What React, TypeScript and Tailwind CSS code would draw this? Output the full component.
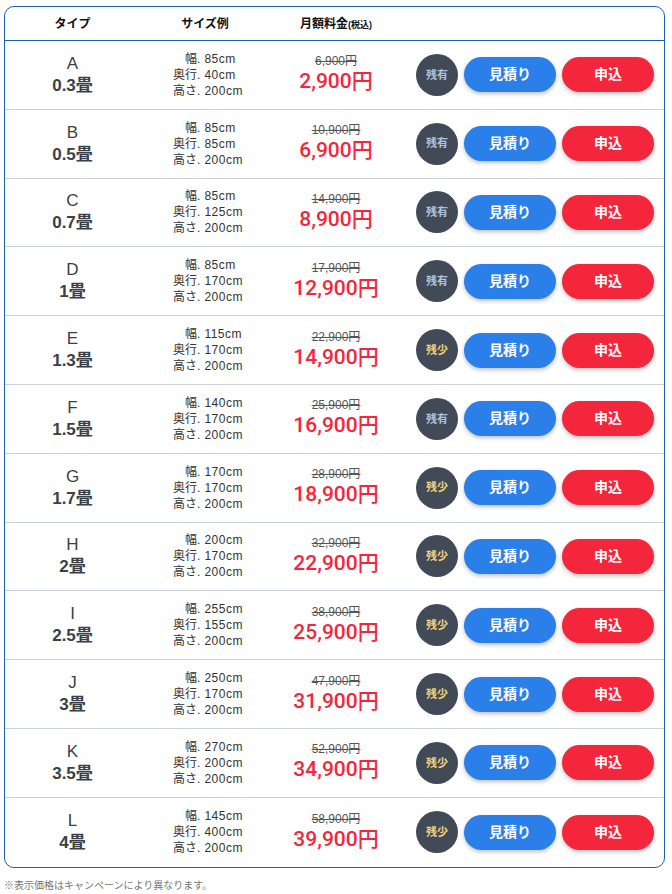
const ROWS = [
  { type: 'A', tatami: '0.3畳', w: 85, d: 40, h: 200, was: '6,900', price: '2,900', stock: 'many' },
  { type: 'B', tatami: '0.5畳', w: 85, d: 85, h: 200, was: '10,900', price: '6,900', stock: 'many' },
  { type: 'C', tatami: '0.7畳', w: 85, d: 125, h: 200, was: '14,900', price: '8,900', stock: 'many' },
  { type: 'D', tatami: '1畳', w: 85, d: 170, h: 200, was: '17,900', price: '12,900', stock: 'many' },
  { type: 'E', tatami: '1.3畳', w: 115, d: 170, h: 200, was: '22,900', price: '14,900', stock: 'few' },
  { type: 'F', tatami: '1.5畳', w: 140, d: 170, h: 200, was: '25,900', price: '16,900', stock: 'many' },
  { type: 'G', tatami: '1.7畳', w: 170, d: 170, h: 200, was: '28,900', price: '18,900', stock: 'few' },
  { type: 'H', tatami: '2畳', w: 200, d: 170, h: 200, was: '32,900', price: '22,900', stock: 'few' },
  { type: 'I', tatami: '2.5畳', w: 255, d: 155, h: 200, was: '38,900', price: '25,900', stock: 'few' },
  { type: 'J', tatami: '3畳', w: 250, d: 170, h: 200, was: '47,900', price: '31,900', stock: 'few' },
  { type: 'K', tatami: '3.5畳', w: 270, d: 200, h: 200, was: '52,900', price: '34,900', stock: 'few' },
  { type: 'L', tatami: '4畳', w: 145, d: 400, h: 200, was: '58,900', price: '39,900', stock: 'few' },
] as const;

const FONT = '[font-family:"Liberation_Sans","Noto_Sans_CJK_JP",sans-serif]';

export default function App() {
  return (
    <div className={`min-h-screen bg-white pt-[6px] ${FONT}`}>
      <div className="ml-[4px] w-[661px] overflow-hidden rounded-[10px] border border-[#1b5fb0]">
        {/* Header */}
        <div className="grid h-[34px] grid-cols-[135px_130px_132px_1fr] items-center border-b border-[#1b5fb0] text-[12px] font-bold text-[#111]">
          <div className="text-center">タイプ</div>
          <div className="text-center">サイズ例</div>
          <div className="text-center">
            月額料金<span className="text-[9px]">(税込)</span>
          </div>
          <div />
        </div>

        {ROWS.map((r, i) => (
          <div
            key={r.type}
            className={`grid h-[68.8px] grid-cols-[135px_130px_132px_1fr] items-center ${
              i < ROWS.length - 1 ? 'border-b border-[#cdd2da]' : ''
            }`}
          >
            {/* Type */}
            <div className="flex flex-col items-center text-[#3a3f48]">
              <span className="text-[17px] leading-[22px]">{r.type}</span>
              <span className="text-[17px] font-bold leading-[22px]">{r.tatami}</span>
            </div>

            {/* Size */}
            <div className="flex justify-center pl-[6px]">
              <div className="grid grid-cols-[auto_auto] gap-x-[4px] text-[12px] leading-[16px] text-[#333]">
                <span className="text-right">幅.</span>
                <span className="tracking-[0.04em]">{r.w}cm</span>
                <span className="text-right">奥行.</span>
                <span className="tracking-[0.04em]">{r.d}cm</span>
                <span className="text-right">高さ.</span>
                <span className="tracking-[0.04em]">{r.h}cm</span>
              </div>
            </div>

            {/* Price */}
            <div className="flex flex-col items-center">
              <span className="text-[12px] leading-[14px] text-[#555] line-through">{r.was}円</span>
              <span className="text-[21px] font-medium leading-[27px] text-[#f4263b] [font-family:Roboto,'Noto_Sans_CJK_JP',sans-serif]">
                {r.price}円
              </span>
            </div>

            {/* Actions */}
            <div className="flex items-center justify-center gap-[6px] pl-[4px]">
              <div
                className={`flex h-[42px] w-[42px] items-center justify-center rounded-full bg-[#424a57] text-[11px] font-bold ${
                  r.stock === 'few' ? 'text-[#f3d27c]' : 'text-[#aec3de]'
                }`}
              >
                {r.stock === 'few' ? '残少' : '残有'}
              </div>
              <button className="h-[35px] w-[92px] rounded-full bg-[#2b7fe9] text-[14px] font-bold text-white shadow-[0_2px_4px_rgba(0,0,0,0.25)]">
                見積り
              </button>
              <button className="h-[35px] w-[92px] rounded-full bg-[#f4263b] text-[14px] font-bold text-white shadow-[0_2px_4px_rgba(0,0,0,0.25)]">
                申込
              </button>
            </div>
          </div>
        ))}
      </div>
      <p className="ml-[4px] mt-[11px] text-[10px] leading-[14px] text-[#777]">
        ※表示価格はキャンペーンにより異なります。
      </p>
    </div>
  );
}
